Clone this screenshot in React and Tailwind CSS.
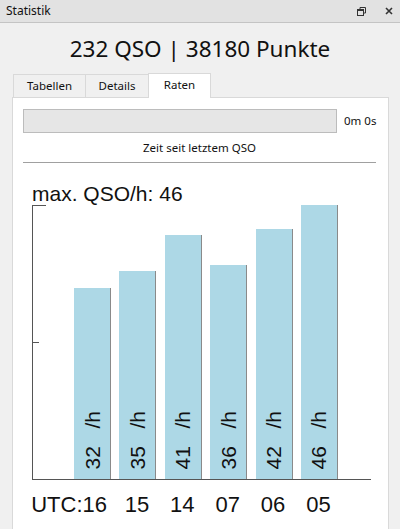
import React from 'react';

const rates = [
  { hour: '16', value: 32 },
  { hour: '15', value: 35 },
  { hour: '14', value: 41 },
  { hour: '07', value: 36 },
  { hour: '06', value: 42 },
  { hour: '05', value: 46 },
];

const maxRate = 46;
const chartHeight = 274;

const RestoreIcon = () => (
  <svg width="9" height="9" viewBox="0 0 9 9" fill="none" stroke="#333" strokeWidth="1">
    <path d="M3 2.5V0.5H8.5V6H6.5" />
    <rect x="0.5" y="2.5" width="6" height="6" />
    <path d="M0.5 3.5H6.5" />
  </svg>
);

const CloseIcon = () => (
  <svg width="8" height="8" viewBox="0 0 8 8" stroke="#333" strokeWidth="1.6">
    <path d="M1 1L7 7M7 1L1 7" />
  </svg>
);

const App = () => {
  return (
    <div className="w-[400px] h-[529px] overflow-hidden bg-[#f0f0f0] flex flex-col font-['Noto_Sans',sans-serif] text-[#111]">
      {/* Title bar */}
      <div className="h-[23px] flex items-center justify-between pl-[6px] pr-[7px] bg-[#e2e2e2] border-b border-[#c4c4c4]">
        <span className="text-[12px]">Statistik</span>
        <div className="flex items-center gap-[19px]">
          <RestoreIcon />
          <CloseIcon />
        </div>
      </div>

      {/* Header */}
      <div className="h-[49px] flex items-center justify-center pt-[3px]">
        <span className="text-[22.5px] leading-none">232 QSO | 38180 Punkte</span>
      </div>

      {/* Tabs */}
      <div className="flex items-end pl-[13px] h-[25px] text-[11.5px]">
        <div className="w-[72px] h-[23px] flex items-center justify-center border-l border-t border-[#d9d9d9] bg-[#f0f0f0]">
          Tabellen
        </div>
        <div className="w-[63px] h-[23px] flex items-center justify-center border-l border-t border-[#d9d9d9] bg-[#f0f0f0]">
          Details
        </div>
        <div className="w-[63px] h-[25px] -mb-px relative z-10 flex items-center justify-center border-l border-t border-r border-[#d9d9d9] bg-white pb-[2px]">
          Raten
        </div>
      </div>

      {/* Panel */}
      <div className="flex-1 ml-[12px] mr-[11px] bg-white border border-[#d9d9d9] border-b-0 pl-[10px] pr-[10px] pt-[11px]">
        <div className="flex items-center">
          <div className="w-[314px] h-[24px] shrink-0 bg-[#e6e6e6] border border-[#bcbcbc]" />
          <span className="ml-[7px] text-[11.5px] whitespace-nowrap">0m 0s</span>
        </div>
        <div className="text-center text-[11.5px] mt-[9px] leading-none pr-[2px]">Zeit seit letztem QSO</div>
        <div className="mt-[8px] mr-[2px] h-px bg-[#a0a0a0]" />

        {/* Rate chart */}
        <div className="ml-[9px] font-['Liberation_Sans',Arial,sans-serif]">
          <div className="mt-[20px] text-[21px] leading-none">max. QSO/h: {maxRate}</div>
          <div className="relative mt-[1px] h-[275px] w-[339px] border-l border-b border-[#555] flex items-end pl-[41px] gap-[8.4px]">
            <div className="absolute top-0 -left-px w-[14px] h-px bg-[#555]" />
            <div className="absolute top-[137px] -left-px w-[7px] h-px bg-[#555]" />
            {rates.map((r) => (
              <div
                key={r.hour}
                className="w-[37px] bg-[#add8e6] border-r border-[#8a8a8a] flex flex-col justify-end items-center pb-[9px]"
                style={{ height: Math.round((r.value * chartHeight) / maxRate) }}
              >
                <span className="[writing-mode:vertical-rl] rotate-180 whitespace-pre text-[21px] leading-none">
                  {`${r.value}   /h`}
                </span>
              </div>
            ))}
          </div>
          <div className="flex mt-[14px] text-[22px] leading-none pl-[41px] gap-[8.4px]">
            {rates.map((r, idx) => (
              <div key={r.hour} className={`w-[37px] flex whitespace-nowrap ${idx === 0 ? 'justify-end pr-[3px]' : 'justify-center'}`}>
                {idx === 0 ? `UTC:${r.hour}` : r.hour}
              </div>
            ))}
          </div>
        </div>
      </div>
    </div>
  );
};

export default App;
